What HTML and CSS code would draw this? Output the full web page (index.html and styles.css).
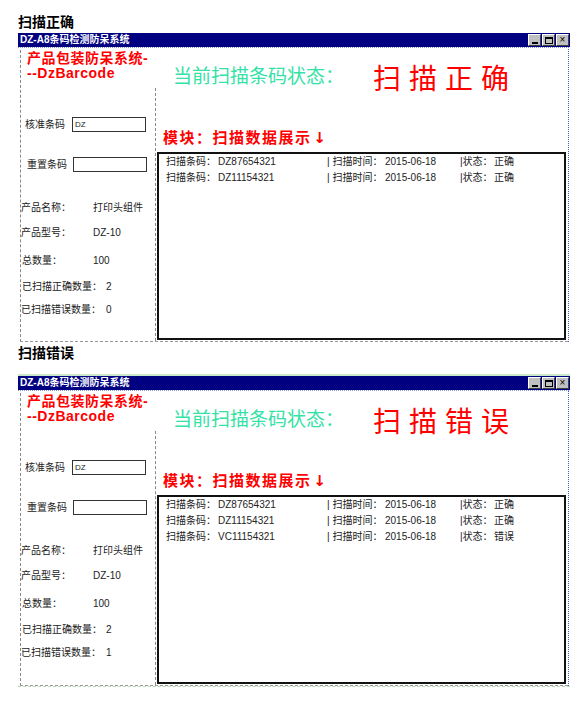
FILE: index.html
```html
<!DOCTYPE html>
<html lang="zh-CN">
<head>
<meta charset="utf-8">
<title>扫描状态</title>
<link rel="stylesheet" href="styles.css">
</head>
<body>
<div class="page">
  <h2 class="heading">扫描正确</h2>
  <div class="window">
    <div class="titlebar">
      <span class="title">DZ-A8条码检测防呆系统</span>
      <span class="controls">
        <span class="ctl ctl--min"><span class="min-bar"></span></span>
        <span class="ctl ctl--max"><span class="max-box"></span></span>
        <span class="ctl ctl--close">×</span>
      </span>
    </div>
    <div class="client">
      <div class="frame">
        <div class="header">
          <div class="brand">产品包装防呆系统-<br>--DzBarcode</div>
          <div class="state-label">当前扫描条码状态：</div>
          <div class="state">扫描正确</div>
        </div>
        <div class="body">
          <div class="panel">
            <div class="field field--code"><span class="field-label field-label--code">核准条码</span><span class="box">DZ</span></div>
            <div class="field field--reset"><span class="field-label field-label--reset">重置条码</span><span class="box"></span></div>
            <div class="info info--name"><span class="info-label">产品名称：</span><span>打印头组件</span></div>
            <div class="info info--model"><span class="info-label">产品型号：</span><span>DZ-10</span></div>
            <div class="info info--total"><span class="info-label info-label--total">总数量：</span><span>100</span></div>
            <div class="info info--ok"><span class="info-label info-label--ok">已扫描正确数量：</span><span>2</span></div>
            <div class="info info--err"><span class="info-label info-label--err">已扫描错误数量：</span><span>0</span></div>
          </div>
          <div class="main">
            <div class="module-title">模块：扫描数据展示<span class="arrow">↓</span></div>
            <div class="list">
              <div class="row"><span class="c1">扫描条码：</span><span class="c2">DZ87654321</span><span class="c3">| 扫描时间：</span><span class="c4">2015-06-18</span><span class="c5">|状态：</span><span>正确</span></div>
              <div class="row"><span class="c1">扫描条码：</span><span class="c2">DZ11154321</span><span class="c3">| 扫描时间：</span><span class="c4">2015-06-18</span><span class="c5">|状态：</span><span>正确</span></div>
            </div>
          </div>
        </div>
      </div>
    </div>
  </div>

  <h2 class="heading heading--second">扫描错误</h2>
  <div class="window window--active">
    <div class="titlebar">
      <span class="title">DZ-A8条码检测防呆系统</span>
      <span class="controls">
        <span class="ctl ctl--min"><span class="min-bar"></span></span>
        <span class="ctl ctl--max"><span class="max-box"></span></span>
        <span class="ctl ctl--close">×</span>
      </span>
    </div>
    <div class="client client--tall">
      <div class="frame">
        <div class="header">
          <div class="brand">产品包装防呆系统-<br>--DzBarcode</div>
          <div class="state-label">当前扫描条码状态：</div>
          <div class="state">扫描错误</div>
        </div>
        <div class="body">
          <div class="panel">
            <div class="field field--code"><span class="field-label field-label--code">核准条码</span><span class="box">DZ</span></div>
            <div class="field field--reset"><span class="field-label field-label--reset">重置条码</span><span class="box"></span></div>
            <div class="info info--name"><span class="info-label">产品名称：</span><span>打印头组件</span></div>
            <div class="info info--model"><span class="info-label">产品型号：</span><span>DZ-10</span></div>
            <div class="info info--total"><span class="info-label info-label--total">总数量：</span><span>100</span></div>
            <div class="info info--ok"><span class="info-label info-label--ok">已扫描正确数量：</span><span>2</span></div>
            <div class="info info--err"><span class="info-label info-label--err">已扫描错误数量：</span><span>1</span></div>
          </div>
          <div class="main">
            <div class="module-title">模块：扫描数据展示<span class="arrow">↓</span></div>
            <div class="list">
              <div class="row"><span class="c1">扫描条码：</span><span class="c2">DZ87654321</span><span class="c3">| 扫描时间：</span><span class="c4">2015-06-18</span><span class="c5">|状态：</span><span>正确</span></div>
              <div class="row"><span class="c1">扫描条码：</span><span class="c2">DZ11154321</span><span class="c3">| 扫描时间：</span><span class="c4">2015-06-18</span><span class="c5">|状态：</span><span>正确</span></div>
              <div class="row"><span class="c1">扫描条码：</span><span class="c2">VC11154321</span><span class="c3">| 扫描时间：</span><span class="c4">2015-06-18</span><span class="c5">|状态：</span><span>错误</span></div>
            </div>
          </div>
        </div>
      </div>
    </div>
  </div>
</div>
</body>
</html>
```
FILE: styles.css
```css
* { box-sizing: border-box; }
body {
  margin: 0;
  background: #fff;
  font-family: "Liberation Sans", "Noto Sans CJK SC", sans-serif;
  color: #111;
}
.page {
  padding-left: 18px;
  width: 570px;
}
.heading {
  margin: 0 0 3px 0;
  padding-top: 12px;
  font-size: 14px;
  line-height: 18px;
  font-weight: bold;
  color: #000;
  font-family: "Noto Sans CJK SC", sans-serif;
}
.heading--second {
  padding-top: 1px;
  margin-bottom: 13px;
}
.window {
  width: 552px;
}
.window--active {
  border-top: 2px solid #c8e8c8;
  border-bottom: 1px dashed #b8dcb8;
}
.titlebar {
  height: 14px;
  background: #000080;
  display: flex;
  align-items: center;
  justify-content: space-between;
  padding-left: 2px;
}
.title {
  color: #fff;
  font-size: 10px;
  line-height: 14px;
  font-weight: bold;
}
.controls {
  display: flex;
  gap: 1px;
  padding-right: 1px;
}
.ctl {
  width: 13px;
  height: 12px;
  background: #c0c0c0;
  border: 1px solid;
  border-color: #fff #404040 #404040 #fff;
  display: flex;
  align-items: center;
  justify-content: center;
  font-size: 10px;
  line-height: 10px;
  color: #000;
}
.ctl--min { align-items: flex-end; padding-bottom: 1px; }
.min-bar {
  width: 6px;
  height: 2px;
  background: #000;
}
.max-box {
  width: 8px;
  height: 7px;
  border: 1px solid #000;
  border-top-width: 2px;
}
.client {
  height: 295px;
  margin-right: 1px;
  border-right: 1px dotted #4a5ac8;
  border-top: 1px dotted #8a96c8;
  padding-top: 2px;
  padding-left: 2px;
  display: flex;
  flex-direction: column;
}
.client--tall { height: 296px; }
.frame {
  flex: 1;
  border-left: 1px dashed #888;
  border-bottom: 1px dashed #999;
  display: flex;
  flex-direction: column;
}
.header {
  height: 38px;
  display: flex;
  flex-shrink: 0;
}
.brand {
  width: 152px;
  padding-left: 6px;
  padding-top: 1px;
  color: #ff0000;
  font-size: 14px;
  line-height: 15px;
  letter-spacing: 0.5px;
  font-weight: bold;
}
.state-label {
  width: 200px;
  margin-top: 14px;
  color: #34e2a6;
  font-size: 19px;
  line-height: 22px;
  font-family: "Noto Sans CJK SC", sans-serif;
  font-weight: 400;
  white-space: nowrap;
}
.state {
  margin-top: 11px;
  color: #ff0000;
  font-size: 28px;
  line-height: 32px;
  letter-spacing: 8px;
  font-family: "Noto Sans CJK SC", sans-serif;
  font-weight: 400;
  white-space: nowrap;
}
.body {
  flex: 1;
  display: flex;
}
.panel {
  width: 135px;
  border-right: 1px dashed #888;
  font-size: 10px;
  color: #222;
}
.field {
  display: flex;
  align-items: center;
  height: 15px;
}
.field--code { margin-top: 29px; padding-left: 4px; }
.field--reset { margin-top: 25px; padding-left: 6px; }
.field-label { line-height: 15px; }
.field-label--code { width: 47px; }
.field-label--reset { width: 46px; }
.box {
  width: 74px;
  height: 15px;
  border: 1px solid #333;
  font-size: 8px;
  line-height: 13px;
  padding-left: 2px;
}
.info {
  display: flex;
  height: 14px;
  line-height: 14px;
  white-space: nowrap;
}
.info-label { width: 72px; }
.info--name { margin-top: 29px; }
.info--model { margin-top: 11px; }
.info--total { margin-top: 14px; padding-left: 1px; }
.info-label--total { width: 71px; }
.info--ok { margin-top: 12px; padding-left: 1px; }
.info-label--ok { width: 84px; }
.info--err { margin-top: 9px; }
.info-label--err { width: 85px; }
.main {
  flex: 1;
  display: flex;
  flex-direction: column;
}
.module-title {
  margin-top: 41px;
  padding-left: 7px;
  color: #ff0000;
  font-size: 15px;
  line-height: 18px;
  letter-spacing: 1.5px;
  font-weight: bold;
  white-space: nowrap;
}
.arrow {
  margin-left: 2px;
  font-family: "DejaVu Sans", sans-serif;
}
.list {
  flex: 1;
  margin: 5px 2px 1px 1px;
  border: 2px solid #111;
  padding-top: 0;
}
.row {
  display: flex;
  height: 16px;
  line-height: 16px;
  padding-left: 7px;
  font-size: 10px;
  color: #222;
  white-space: nowrap;
}
.c1 { width: 52px; }
.c2 { width: 109px; }
.c3 { width: 58px; }
.c4 { width: 75px; }
.c5 { width: 34px; }
```
